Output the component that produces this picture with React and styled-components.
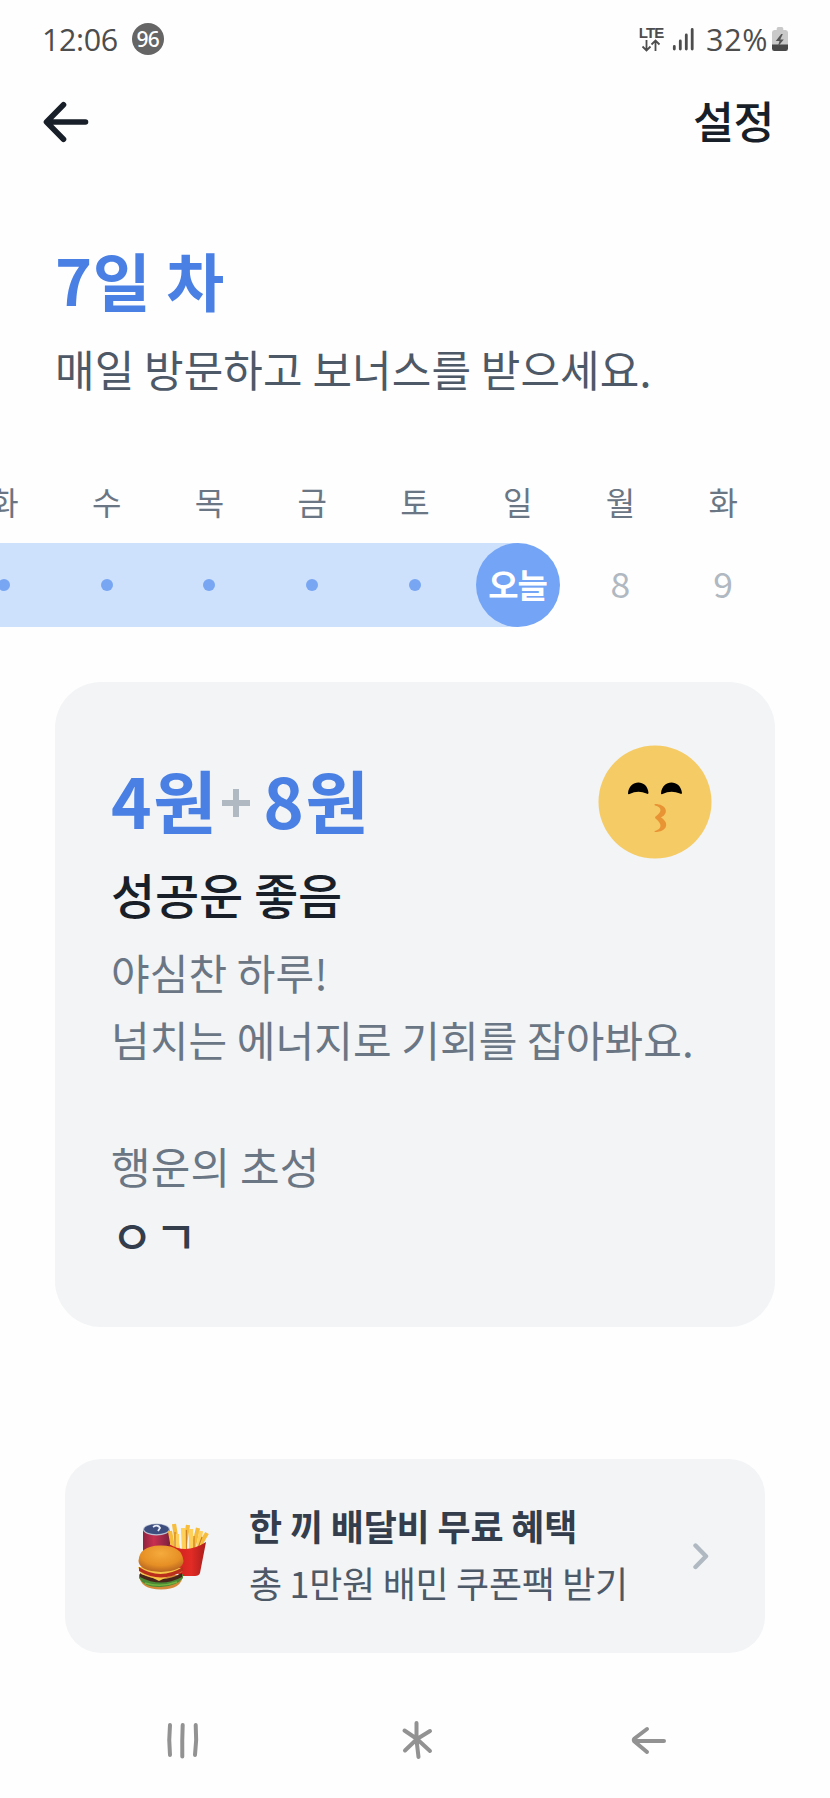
import React from 'react'
import styled, { createGlobalStyle } from 'styled-components'

const GlobalStyle = createGlobalStyle`
    * {
        box-sizing: border-box;
    }
    body {
        margin: 0;
        background: #fefefe;
        font-family: "Noto Sans CJK KR", "Noto Sans", sans-serif;
    }
    h1, h2, p {
        margin: 0;
        font-weight: 400;
    }
    button {
        border: 0;
        padding: 0;
        background: none;
        font-family: inherit;
    }
    svg {
        display: block;
        flex: none;
    }
`

const Screen = styled.div`
    width: 830px;
    height: 1798px;
    overflow: hidden;
    display: flex;
    flex-direction: column;
`

const StatusBar = styled.div`
    height: 78px;
    padding: 0 42px 0 42px;
    display: flex;
    align-items: center;
    justify-content: space-between;
    color: #4d4d4d;
`

const StatusGroup = styled.div`
    display: flex;
    align-items: center;
`

const StatusText = styled.span`
    font: 400 30.5px/40px "Open Sans", sans-serif;
    letter-spacing: -0.4px;
`

const Percent = styled(StatusText)`
    margin: 0 4px 0 12px;
    letter-spacing: 0.6px;
`

const Count = styled.span`
    width: 32px;
    height: 32px;
    margin-left: 14px;
    border-radius: 50%;
    background: #656565;
    color: #fff;
    font: 500 21px/32px "Noto Sans", sans-serif;
    letter-spacing: -0.8px;
    text-align: center;
`

const Network = styled.div`
    width: 26px;
    margin-right: 8px;
    display: flex;
    flex-direction: column;
    align-items: center;
    font: 700 15px/13px "Liberation Sans", sans-serif;
    letter-spacing: -0.9px;
`

const Header = styled.header`
    height: 88px;
    padding: 0 55px 0 42px;
    display: flex;
    align-items: center;
    justify-content: space-between;
`

const Setting = styled.button`
    font-size: 44.5px;
    line-height: 60px;
    font-weight: 500;
    letter-spacing: -0.5px;
    color: #191f28;
    margin: -4px 1px 0 0;
`

const Intro = styled.section`
    padding: 73px 55px 0;
`

const DayCount = styled.h1`
    font-size: 63px;
    line-height: 80px;
    font-weight: 700;
    letter-spacing: 0.6px;
    color: #4a80e4;
`

const Guide = styled.p`
    margin-top: 19px;
    font-size: 43px;
    line-height: 60px;
    letter-spacing: 0.1px;
    color: #4e5968;
`

const Week = styled.section`
    margin: 81px 0 0 -47.5px;
    display: flex;
`

const Day = styled.div`
    flex: none;
    width: 102.75px;
    display: flex;
    flex-direction: column;
    gap: 20px;
`

const DayName = styled.span`
    font-size: 32px;
    line-height: 44px;
    text-align: center;
    color: #6b7684;
`

const fills = {
    done: '#cde0fc',
    today: 'linear-gradient(to right, #cde0fc 50%, transparent 50%)',
    next: 'none',
}

const DayCell = styled.div`
    height: 84px;
    display: flex;
    align-items: center;
    justify-content: center;
    background: ${props => fills[props.$state]};
`

const DayNumber = styled.span`
    padding-bottom: 6px;
    font-size: 35.5px;
    color: #b0b8c1;
`

const Dot = styled.span`
    width: 12px;
    height: 12px;
    border-radius: 50%;
    background: #78a6f2;
`

const Today = styled.span`
    width: 84px;
    height: 84px;
    border-radius: 50%;
    background: #74a4f5;
    color: #fff;
    font-size: 33px;
    line-height: 82px;
    font-weight: 700;
    letter-spacing: -1px;
    text-align: center;
`

const Card = styled.section`
    height: 645px;
    margin: 55px 55px 0;
    padding: 72px 63px 0 56px;
    border-radius: 46px;
    background: #f2f4f6;
    color: #6b7684;
`

const CardTop = styled.div`
    height: 90px;
    display: flex;
    justify-content: space-between;
    align-items: center;
`

const Amount = styled.div`
    display: flex;
    align-items: center;
    font-size: 69px;
    line-height: 90px;
    font-weight: 700;
    letter-spacing: 1.5px;
    color: #4a80e4;
`

const Plus = styled.span`
    width: 28px;
    height: 28px;
    margin: 8px 13px 0 4px;
    background:
        linear-gradient(#b0b8c1, #b0b8c1) center / 28px 6px no-repeat,
        linear-gradient(#b0b8c1, #b0b8c1) center / 6px 28px no-repeat;
`

const Face = styled.svg`
    margin-top: 6px;
`

const Fortune = styled.h2`
    margin-top: 17px;
    font-size: 48px;
    line-height: 64px;
    font-weight: 500;
    letter-spacing: -0.1px;
    color: #191f28;
`

const Message = styled.p`
    margin-top: 13px;
    font-size: 42px;
    line-height: 67px;
    letter-spacing: 0.1px;
    white-space: pre-line;
`

const LuckyLabel = styled.p`
    margin-top: 63px;
    font-size: 43px;
    line-height: 60px;
    letter-spacing: 0.2px;
`

const Lucky = styled.p`
    margin-top: 9px;
    font-size: 46px;
    line-height: 60px;
    font-weight: 500;
    letter-spacing: 1.5px;
    color: #333d4b;
`

const Promo = styled.section`
    height: 194px;
    margin: 132px 65px 0;
    padding: 0 56px 0 73px;
    display: flex;
    align-items: center;
    border-radius: 36px;
    background: #f2f4f6;
`

const PromoText = styled.div`
    flex: 1;
    margin: 0 0 4px 39px;
    display: flex;
    flex-direction: column;
`

const PromoTitle = styled.span`
    font-size: 36px;
    line-height: 57px;
    font-weight: 700;
    letter-spacing: -0.2px;
    color: #333d4b;
`

const PromoSub = styled.span`
    font-size: 36px;
    line-height: 57px;
    letter-spacing: -0.3px;
    color: #4e5968;
`

const NavBar = styled.nav`
    flex: 1;
    padding: 29px 163px 0 166px;
    display: flex;
    align-items: center;
    justify-content: space-between;
`

const days = [
    { name: '화', state: 'done' },
    { name: '수', state: 'done' },
    { name: '목', state: 'done' },
    { name: '금', state: 'done' },
    { name: '토', state: 'done' },
    { name: '일', state: 'today' },
    { name: '월', state: 'next', count: 8 },
    { name: '화', state: 'next', count: 9 },
]

const DataArrows = () => (
    <svg width="20" height="13" viewBox="0 0 20 13" fill="none" stroke="#4d4d4d" strokeWidth="1.8">
        <path d="M5.5 1v10M1.5 7.5l4 4 4-4M14.5 12V2M10.5 5.5l4-4 4 4" />
    </svg>
)

const Signal = () => (
    <svg width="22" height="24" viewBox="0 0 22 24" stroke="#4d4d4d" strokeWidth="2.8" strokeLinecap="round">
        <path d="M2.3 19.5v2.5M8.3 14v8M14.3 8v14M20.2 2.5v19.5" />
    </svg>
)

const Battery = () => (
    <svg width="16" height="24" viewBox="0 0 17 24" preserveAspectRatio="none">
        <path d="M5 3V1.5Q5 0 6.5 0h4Q12 0 12 1.5V3h2.5Q17 3 17 5.5V18H0V5.5Q0 3 2.5 3z" fill="#c9c9c9" />
        <path d="M0 17.5h17v4q0 2.5-2.5 2.5h-12Q0 24 0 21.5z" fill="#484848" />
        <path d="M9.8 7L4 14h4l-2 6 6.5-7.5H8.8L11.5 7z" fill="#555" />
    </svg>
)

const BackArrow = () => (
    <svg width="48" height="44" viewBox="0 0 48 44" fill="none" stroke="#191f28" strokeWidth="5.6" strokeLinecap="round" strokeLinejoin="round">
        <path d="M43.5 22H5M21.5 4.8L4.5 22l17 17.2" />
    </svg>
)

const KissFace = () => (
    <Face width="114" height="114" viewBox="0 0 114 114">
        <circle cx="57" cy="57" r="56.5" fill="#f5cb66" />
        <path d="M30 48.5C31 34 49.5 34 50.5 48Q50 49.5 48.5 48.5Q40 45 31.5 49Q30 49.5 30 48.5z" />
        <path d="M63 48.5C64 34 82.5 34 84 48Q83.5 49.5 82 48.5Q73 45 64.5 49Q63 49.5 63 48.5z" />
        <path d="M57 59C68 59 72 68 63 72.5C72 78 69 87 57 87Q55.5 86.5 57 86C64 84 64.5 79 57.5 73.5Q56.5 72.5 57.5 71.5C64.5 67 64 62 57 60.5Q55.5 59.5 57 59z" fill="#e89434" />
    </Face>
)

const FastFood = () => (
    <svg width="72" height="68" viewBox="0 0 72 68">
        <defs>
            <linearGradient id="can" x1="0" x2="1">
                <stop offset="0" stopColor="#8e2440" />
                <stop offset="0.4" stopColor="#c92f50" />
                <stop offset="1" stopColor="#7b2140" />
            </linearGradient>
            <linearGradient id="box" x1="0" x2="1">
                <stop offset="0" stopColor="#c81d1c" />
                <stop offset="0.6" stopColor="#e22b25" />
                <stop offset="1" stopColor="#a91d1b" />
            </linearGradient>
            <radialGradient id="bun" cx="0.5" cy="0.3" r="0.7">
                <stop offset="0" stopColor="#f6ab3c" />
                <stop offset="0.65" stopColor="#e58f25" />
                <stop offset="1" stopColor="#b96520" />
            </radialGradient>
        </defs>
        <path d="M5 7v30h27V7z" fill="url(#can)" />
        <ellipse cx="18.5" cy="7.5" rx="13.5" ry="6" fill="#b9c0d2" />
        <ellipse cx="18.5" cy="7.2" rx="12.3" ry="5" fill="#3d4d7e" />
        <path d="M15 5q5-3 7 1l-2 3" stroke="#e8edf5" strokeWidth="1.8" fill="none" />
        <g stroke="#f5bd3b" strokeWidth="4.2">
            <path d="M40 28L36 2M46 28L50 3M55 28L60 6M59 28L69 11M35 26L32 9" />
        </g>
        <g stroke="#ffd15b" strokeWidth="4.2">
            <path d="M39 28V12M46 28l-1-22M53 28V7M60 28l3-19" />
        </g>
        <path d="M37 10v17M48.5 8v19M56 14v13M64 15l-4 11" stroke="#cf8423" strokeWidth="1.2" />
        <path d="M31 22Q48 33 68 20L62 51Q61 54 57 54H41z" fill="url(#box)" />
        <path d="M1 53q1 14.500 22 14.500Q44 67.500 45 53z" fill="#d38a38" />
        <path d="M1 52q21 16 44 0v4q-6 8-22 9T1 56z" fill="#4c8a35" />
        <path d="M2 51q21 12 42 0v4q-21 11-42 0z" fill="#48251b" />
        <path d="M0 45l3 7 12 4 6 3 8-4 15-5 1-4z" fill="#f6c545" />
        <path d="M1 45q21 14 44 0v4q-22 13-44 0z" fill="#b92e1c" />
        <path d="M.5 39Q1 24 22 23.5Q44 23 45.5 39Q45 49 23 50Q1 49 .5 39z" fill="url(#bun)" />
        <path d="M7 61q16 5 32-1" stroke="#73b441" strokeWidth="1.4" fill="none" />
    </svg>
)

const Chevron = () => (
    <svg width="16" height="28" viewBox="0 0 16 28" fill="none" stroke="#b0b8c1" strokeWidth="4.4" strokeLinecap="round" strokeLinejoin="round">
        <path d="M2.5 3.5L13 14.3 2.5 25" />
    </svg>
)

const NavIcon = ({ width, d }) => (
    <svg width={width} height="40" viewBox={`0 0 ${width} 40`} fill="none" stroke="#929292" strokeWidth="4" strokeLinecap="round" strokeLinejoin="round">
        <path d={d} />
    </svg>
)

export default function App() {
    return (
        <Screen>
            <GlobalStyle />
            <StatusBar>
                <StatusGroup>
                    <StatusText>12:06</StatusText>
                    <Count>96</Count>
                </StatusGroup>
                <StatusGroup>
                    <Network>
                        LTE
                        <DataArrows />
                    </Network>
                    <Signal />
                    <Percent>32%</Percent>
                    <Battery />
                </StatusGroup>
            </StatusBar>

            <Header>
                <BackArrow />
                <Setting>설정</Setting>
            </Header>

            <Intro>
                <DayCount>7일 차</DayCount>
                <Guide>매일 방문하고 보너스를 받으세요.</Guide>
            </Intro>

            <Week>
                {days.map((day, i) => (
                    <Day key={i}>
                        <DayName>{day.name}</DayName>
                        <DayCell $state={day.state}>
                            {day.state === 'done' && <Dot />}
                            {day.state === 'today' && <Today>오늘</Today>}
                            {day.count && <DayNumber>{day.count}</DayNumber>}
                        </DayCell>
                    </Day>
                ))}
            </Week>

            <Card>
                <CardTop>
                    <Amount>
                        4원
                        <Plus />
                        8원
                    </Amount>
                    <KissFace />
                </CardTop>
                <Fortune>성공운 좋음</Fortune>
                <Message>{'야심찬 하루!\n넘치는 에너지로 기회를 잡아봐요.'}</Message>
                <LuckyLabel>행운의 초성</LuckyLabel>
                <Lucky>ㅇㄱ</Lucky>
            </Card>

            <Promo>
                <FastFood />
                <PromoText>
                    <PromoTitle>한 끼 배달비 무료 혜택</PromoTitle>
                    <PromoSub>총 1만원 배민 쿠폰팩 받기</PromoSub>
                </PromoText>
                <Chevron />
            </Promo>

            <NavBar>
                <NavIcon width={34} d="M4 5Q2.5 20 4 35M16.7 5Q16 20 16.3 36.5M29.7 5Q31 20 29 35" />
                <NavIcon width={38} d="M20.5 3V20L22.5 37M8.5 10.5L21 19 34 31M34 11L21 19 9 30.5" />
                <NavIcon width={38} d="M35 21H5M18 9L5.5 18.5Q4 20 5.5 21.5L18 32" />
            </NavBar>
        </Screen>
    )
}
